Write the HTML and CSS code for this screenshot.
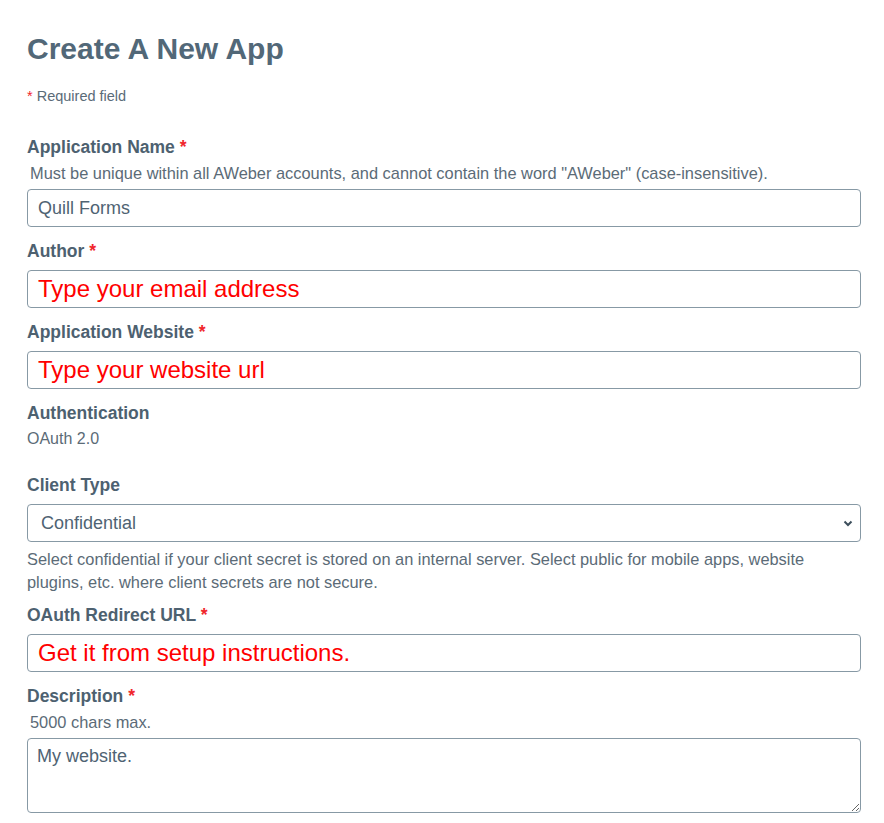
FILE: index.html
```html
<!DOCTYPE html>
<html lang="en">
<head>
    <meta charset="UTF-8">
    <meta name="viewport" content="width=device-width, initial-scale=1.0">
    <title>Create A New App</title>
    <link rel="stylesheet" href="styles.css">
</head>
<body>
    <div class="page">
        <h1>Create A New App</h1>
        <p class="required-note"><span class="req">*</span> Required field</p>

        <form class="app-form">
            <div class="field">
                <label for="app-name">Application Name <span class="req">*</span></label>
                <p class="help">Must be unique within all AWeber accounts, and cannot contain the word "AWeber" (case-insensitive).</p>
                <input type="text" id="app-name" value="Quill Forms">
            </div>

            <div class="field">
                <label for="author">Author <span class="req">*</span></label>
                <input type="text" id="author" class="hint" value="Type your email address">
            </div>

            <div class="field">
                <label for="website">Application Website <span class="req">*</span></label>
                <input type="text" id="website" class="hint" value="Type your website url">
            </div>

            <div class="field static">
                <label>Authentication</label>
                <p class="value">OAuth 2.0</p>
            </div>

            <div class="field with-note">
                <label for="client-type">Client Type</label>
                <div class="select-wrap">
                    <select id="client-type">
                        <option>Confidential</option>
                        <option>Public</option>
                    </select>
                    <svg class="chevron" width="10" height="8" viewBox="0 0 10 8">
                        <path d="M1.5 2.5 L5 6 L8.5 2.5" fill="none" stroke="#3d4f5c" stroke-width="2"/>
                    </svg>
                </div>
                <p class="help after">Select confidential if your client secret is stored on an internal server. Select public for mobile apps, website plugins, etc. where client secrets are not secure.</p>
            </div>

            <div class="field">
                <label for="redirect">OAuth Redirect URL <span class="req">*</span></label>
                <input type="text" id="redirect" class="hint" value="Get it from setup instructions.">
            </div>

            <div class="field">
                <label for="description">Description <span class="req">*</span></label>
                <p class="help">5000 chars max.</p>
                <textarea id="description">My website.</textarea>
            </div>
        </form>
    </div>
</body>
</html>
```

FILE: styles.css
```css
body {
    margin: 0;
    font-family: "Liberation Sans", Arial, Helvetica, sans-serif;
    color: #4f6373;
    background: #fff;
}
.page {
    padding: 31px 23px 0 27px;
}
h1 {
    margin: 0;
    font-size: 30px;
    line-height: 36px;
    font-weight: bold;
    color: #526878;
}
.required-note {
    margin: 19px 0 0;
    font-size: 14.5px;
    line-height: 20px;
    color: #5a6b78;
}
.req {
    color: #f0262c;
}
.app-form {
    margin-top: 30px;
}
.field {
    margin-bottom: 13px;
}
.field label {
    display: block;
    font-size: 17.5px;
    line-height: 22px;
    font-weight: bold;
    color: #4d6170;
    margin-bottom: 8px;
}
.help {
    margin: -4px 0 5px 3px;
    font-size: 16.4px;
    line-height: 22px;
    color: #5b6b77;
}
.help.after {
    margin: 6px 0 0 0;
    line-height: 23px;
}
.value {
    margin: -4px 0 0;
    font-size: 16px;
    line-height: 22px;
    color: #5b6b77;
}
.field.static {
    margin-bottom: 24px;
}
.field.with-note {
    margin-bottom: 10px;
}
input[type="text"],
select,
textarea {
    display: block;
    box-sizing: border-box;
    width: 100%;
    height: 38px;
    margin: 0;
    padding: 0 10px;
    border: 1px solid #8799a5;
    border-radius: 4px;
    background: #fff;
    font-family: "Liberation Sans", Arial, Helvetica, sans-serif;
    font-size: 18px;
    color: #4f6373;
}
input.hint {
    font-size: 24px;
    color: #ff0000;
}
.select-wrap {
    position: relative;
}
select {
    appearance: none;
    padding: 0 13px;
    font-size: 18px;
}
.chevron {
    position: absolute;
    right: 8px;
    top: 15px;
}
textarea {
    height: 75px;
    padding: 6px 9px;
    resize: vertical;
    line-height: 22px;
}
```
